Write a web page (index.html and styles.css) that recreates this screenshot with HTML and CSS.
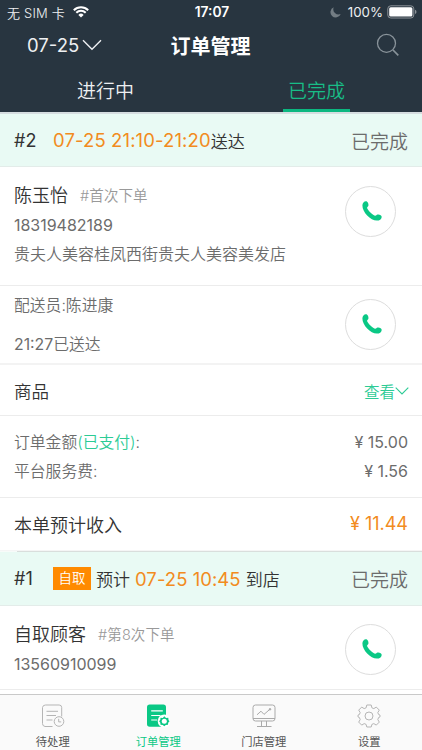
FILE: index.html
```html
<!DOCTYPE html>
<html lang="zh-CN">
<head>
<meta charset="utf-8">
<meta name="viewport" content="width=device-width, initial-scale=1">
<title>订单管理</title>
<link rel="stylesheet" href="styles.css">
</head>
<body>
<svg class="defs" width="0" height="0">
  <symbol id="phone" viewBox="0 0 20 20"><path d="M.4 4.2C.5 2 2 .4 3.9.3c1.8 0 2.900 2.700 2.500 4.400-.2.8-1.300 1.200-1.300 2 0 1.900 6.200 8.100 8.200 8.100.9 0 1.300-1.200 2.200-1.300 1.900-.4 4.300.8 4.200 2.400-.1 2.400-2.200 3.700-4.900 3.700C8.600 19.600.2 11.200.4 4.200z" fill="#0ac885"/></symbol>
</svg>
<div class="app">
  <header class="top">
    <div class="status">
      <div class="carrier"><span class="sim">无 SIM 卡</span>
        <svg width="16" height="12" viewBox="0 0 16 12"><path d="M.8 4.300a10.200 10.200 0 0 1 14.400 0M3.300 6.800a6.600 6.600 0 0 1 9.400 0" fill="none" stroke="#fff" stroke-width="2"/><path d="M8 11.500 5.400 8.900a3.700 3.700 0 0 1 5.200 0z" fill="#fff"/></svg>
      </div>
      <span class="clock">17:07</span>
      <div class="power">
        <svg class="moon" width="11" height="11" viewBox="0 0 11 11"><path d="M3.700.3a5.300 5.300 0 1 0 7 6.800A5.300 5.300 0 0 1 3.700.3z" fill="#737d84"/></svg>
        <span class="percent">100%</span>
        <svg width="30" height="14" viewBox="0 0 30 14"><rect x=".8" y=".8" width="26" height="12.200" rx="3" fill="none" stroke="#8b9297"/><rect x="2.200" y="2.200" width="23.200" height="9.400" rx="1.500" fill="#fff"/><path d="M28 4.800q1.500.6 1.500 2.100T28 9z" fill="#8b9297"/></svg>
      </div>
    </div>
    <div class="nav">
      <div class="date"><span class="date-text">07-25</span>
        <svg width="20" height="12" viewBox="0 0 20 12"><path d="m1 1.200 9 9 9-9" fill="none" stroke="#eef0f2" stroke-width="1.400"/></svg></div>
      <h1>订单管理</h1>
      <svg class="search" width="24" height="24" viewBox="0 0 24 24"><circle cx="10.500" cy="10.300" r="9" fill="none" stroke="#89939a" stroke-width="1.300"/><path d="m17 17 5.300 5.300" stroke="#89939a" stroke-width="1.700"/></svg>
    </div>
    <div class="tabs"><div class="tab"><span>进行中</span></div><div class="tab active"><span>已完成</span></div></div>
  </header>

  <main>
    <section class="order">
      <div class="order-head">
        <span class="no">#2</span><span class="time long">07-25 21:10-21:20</span><span class="what">送达</span><span class="state">已完成</span>
      </div>
      <div class="row customer">
        <div class="info"><div class="person"><b>陈玉怡</b><span class="tag">#首次下单</span></div><div class="tel">18319482189</div><div class="addr">贵夫人美容桂凤西街贵夫人美容美发店</div></div>
        <div class="call"><svg width="20" height="20"><use href="#phone"/></svg></div>
      </div>
      <div class="row courier">
        <div class="info"><div>配送员:陈进康</div><div><span class="at">21:27</span>已送达</div></div>
        <div class="call"><svg width="20" height="20"><use href="#phone"/></svg></div>
      </div>
      <div class="row goods"><b>商品</b><span class="view">查看<svg width="14" height="8" viewBox="0 0 14 8"><path d="m.7.7 6.300 6.300 6.300-6.300" fill="none" stroke="#2ccb95" stroke-width="1.100"/></svg></span></div>
      <div class="row amounts">
        <div class="line"><span>订单金额<em>(已支付)</em>:</span><span class="sum">¥ 15.00</span></div>
        <div class="line"><span>平台服务费:</span><span class="sum">¥ 1.56</span></div>
      </div>
      <div class="income"><b>本单预计收入</b><span class="total">¥ 11.44</span></div>
    </section>
    <div class="gap"></div>
    <section class="order">
      <div class="order-head second">
        <span class="no">#1</span><span class="badge">自取</span><span class="what pre">预计</span><span class="time short">07-25 10:45</span><span class="what">到店</span><span class="state">已完成</span>
      </div>
      <div class="row customer pickup">
        <div class="info"><div class="person"><b>自取顾客</b><span class="tag">#第8次下单</span></div><div class="tel">13560910099</div></div>
        <div class="call"><svg width="20" height="20"><use href="#phone"/></svg></div>
      </div>
    </section>
  </main>

  <footer class="bar">
    <div class="item"><svg width="24" height="24" viewBox="0 0 24 24" fill="none" stroke="#b5b5b5"><path d="M11.500 22.500H4a3 3 0 0 1-2.500-3V3.500a3 3 0 0 1 3-2.500h13.700a2.500 2.500 0 0 1 2.500 2.500v9M5.500 7.300H17M5.500 11.500H15M5.500 16h6"/><circle cx="18" cy="17.500" r="4.800"/><path d="M17.700 14.800v3.100h2.500"/></svg><span>待处理</span></div>
    <div class="item on"><svg width="24" height="24" viewBox="0 0 24 24"><path d="M3.700.5h13.600a2.700 2.700 0 0 1 2.700 2.700v19.500H3.700A2.700 2.700 0 0 1 1 20V3.200A2.700 2.700 0 0 1 3.700.5z" fill="#0ac885"/><path d="M5.200 6.800h11.600M5.200 11.500h9.300M5.200 16h6" stroke="#fff" stroke-width="1.200"/><circle cx="18.300" cy="17" r="6.600" fill="#fff"/><path d="m18.300 12.300 1.700 1.600 2.300-.2.200 2.200 1 1.400-1.300 1.500-.2 2-2.200.1-1.500 1.300-1.600-1.300-2.200-.1-.2-2-1.200-1.500 1.200-1.600.2-2 2.300.2z" fill="#0ac885"/><circle cx="18.300" cy="17.200" r="2.500" fill="#fff"/></svg><span>订单管理</span></div>
    <div class="item"><svg width="24" height="24" viewBox="0 0 24 24" fill="none" stroke="#aaa"><rect x="1" y="1" width="22" height="16" rx="2.500"/><path d="M1 14.500h22M9.500 17v5M14.500 17v5M5 22.500h14.500M5 10.800l4-3.600 3 3.200 6-5.200"/><circle cx="18" cy="5.300" r=".8" fill="#aaa"/></svg><span>门店管理</span></div>
    <div class="item"><svg width="24" height="24" viewBox="0 0 24 24" fill="none" stroke="#b5b5b5"><path d="M9.800 1h4.400l.7 2.800 1.900.8 2.500-1.500 3 3-1.500 2.500.8 1.900 1.400.6v1.800l-1.400.6-.8 2.100 1.500 2.500-3 3-2.500-1.500-1.900.8-.7 2.600H9.800l-.7-2.600-1.900-.8-2.500 1.500-3-3 1.500-2.500-.8-2.100L1 12.900v-1.800l1.400-.6.8-1.900-1.500-2.500 3-3 2.500 1.500 1.900-.8z" stroke-linejoin="round"/><circle cx="12" cy="12" r="4"/></svg><span>设置</span></div>
  </footer>
</div>
</body>
</html>
```
FILE: styles.css
```css
* { box-sizing: border-box; }
body { margin: 0; background: #fff; color: #6c6c6c; font-family: Inter, "Noto Sans CJK SC", sans-serif; font-size: 15.8px; font-weight: 350; }
b, h1, em { font-style: normal; font-weight: 350; margin: 0; }
svg { display: block; flex: none; }
.defs { position: absolute; }
.app { width: 422px; height: 750px; display: flex; flex-direction: column; overflow: hidden; white-space: nowrap; }

.top { height: 114px; flex: none; background: #283540; color: #eef0f2; border-bottom: 2px solid #d6dde0; }
.status { height: 24px; display: grid; grid-template-columns: 1fr auto 1fr; align-items: center; padding: 0 5px 0 7px; font-size: 13px; }
.carrier, .power { display: flex; align-items: center; }
.carrier { gap: 8px; }
.sim { letter-spacing: .2px; }
.clock { font-weight: 600; font-size: 13.8px; color: #fff; }
.power { justify-content: flex-end; }
.moon { margin-right: 7px; }
.percent { margin-right: 4px; font-size: 13.3px; font-weight: 400; }
.nav { height: 45px; display: grid; grid-template-columns: 1fr auto 1fr; align-items: center; padding: 0 22px 3px 27px; }
.date { display: flex; align-items: center; gap: 3px; font-size: 18.500px; font-weight: 400; }
h1 { font-size: 20px; font-weight: 600; color: #fff; margin: 0 3px 0 -3px; }
.search { justify-self: end; }
.tabs { height: 43px; display: flex; }
.tab { flex: 1; display: flex; justify-content: center; font-size: 19px; line-height: 45px; }
.tab span { height: 43px; padding: 0 5px; }
.active span { color: #18bd87; border-bottom: 3px solid #0cb780; }

main { flex: none; height: 580px; }
.order-head { height: 53px; background: #e9faf4; border-bottom: 1px solid #e3ece9; display: flex; align-items: center; padding: 0 14px; color: #333; }
.no { width: 39px; font-size: 18px; font-weight: 400; }
.time { font-size: 18.500px; color: #f28b20; font-weight: 400; }
.long { letter-spacing: .12px; }
.what { font-size: 17px; }
.state { margin-left: auto; font-size: 19px; color: #6c6c6c; }
.row { border-bottom: 1px solid #ececec; }
.customer, .courier { display: flex; justify-content: space-between; padding: 0 27px 0 14px; }
.customer { height: 119px; }
.person { display: flex; align-items: center; height: 28px; margin-top: 13px; color: #333; font-size: 18px; }
.tag { margin-left: 12px; font-size: 14.500px; color: #999; letter-spacing: .1px; }
.tel { height: 29px; line-height: 29px; margin-top: 3px; font-size: 16px; font-weight: 400; letter-spacing: -.02px; }
.addr { line-height: 28px; font-size: 16px; }
.call { width: 51px; height: 51px; border: 1px solid #ddd; border-radius: 50%; display: flex; align-items: center; justify-content: center; margin: 19px -1px 0 0; padding: 0 0 1px 2px; }
.courier { height: 79px; border-bottom: 2px solid #f3f3f3; }
.courier .info { line-height: 39px; }
.courier .call { margin-top: 13px; }
.at { font-weight: 400; }
.goods { height: 51px; display: flex; align-items: center; justify-content: space-between; padding: 1px 13px 0 14px; }
.goods b, .income b { color: #333; font-size: 18px; }
.goods b { font-size: 17.500px; }
.view { display: flex; align-items: center; color: #2ccb95; font-size: 15.500px; }
.amounts { height: 82px; padding: 12px 14px 0; }
.line { display: flex; justify-content: space-between; line-height: 29px; }
em { color: #2ccb95; }
.sum { font-size: 16px; font-weight: 400; }
.income { height: 52px; display: flex; align-items: center; justify-content: space-between; padding: 0 14px 1px; }
.total { font-size: 18px; color: #f28b20; font-weight: 400; }
.gap { height: 2px; background: linear-gradient(90deg, #f7fbf9 17px, #d9dedc 17px) 0 1px no-repeat #f5f5f5; }
.order-head.second { height: 54px; }
.badge { background: #ff8a00; color: #fff; width: 38px; height: 23px; line-height: 22px; text-align: center; font-size: 13.500px; margin-right: 5px; }
.pre { margin-right: 5px; }
.short { margin-right: 5px; letter-spacing: .05px; }
.pickup { height: 84px; }
.pickup .call { margin-top: 18px; }

.bar { flex: none; height: 56px; margin-top: auto; background: #fafafa; border-top: 1px solid #c9c9c9; display: flex; }
.item { flex: 1; display: flex; flex-direction: column; align-items: center; padding-top: 9px; font-size: 11.300px; font-weight: 400; color: #555; }
.item span { line-height: 18px; margin-top: 5px; }
.item.on { color: #0ac885; }
```
